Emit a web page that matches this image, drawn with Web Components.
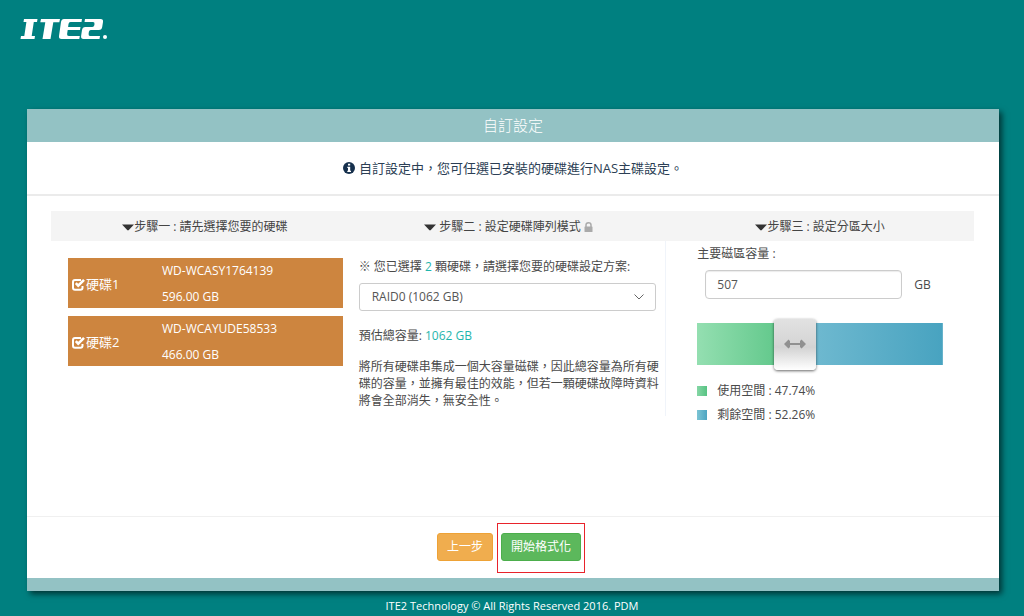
<!DOCTYPE html>
<html lang="zh-Hant">
<head>
<meta charset="utf-8">
<meta name="viewport" content="width=device-width, initial-scale=1">
<title>ITE2 NAS</title>
<style>
html,body{margin:0;min-height:100%}
body{background:#008080;color:#4a4a4a;font:12px/16px "Open Sans","Noto Sans CJK TC",sans-serif}
</style>
</head>
<body>
<nas-setup></nas-setup>

<script>
function define(name, html, init) {
  const tpl = document.createElement('template');
  tpl.innerHTML = html;
  customElements.define(name, class extends HTMLElement {
    constructor() {
      super();
      this.attachShadow({mode: 'open'}).append(tpl.content.cloneNode(true));
    }
    connectedCallback() { if (init) init(this, this.shadowRoot); }
  });
}

define('ite-logo', `
<style>
:host{display:block;line-height:0}
a{display:inline-block}
svg{display:block}
</style>
<a href="#" aria-label="ITE2">
<svg width="88" height="22" viewBox="0 0 88 22" fill="#fff">
<path d="M4 1H17.500L17 4H13.800L11.700 18H15L14.500 21H0.500L1 18H4.300L6.400 4H3.500Z"/>
<path d="M21 1H40L39.300 4.300H33.300L30.500 21H22.500L25.300 4.300H20.300Z"/>
<path d="M44 1H62L61.500 4H50.500Q48.800 4 48.500 6L48.100 9H60.500L60 12H47.700L47.100 16Q46.800 18 48.800 18H59.800L59.300 21H41.500Q38.600 21 39 18L41 4Q41.500 1 44 1Z"/>
<path d="M65 1H80.500Q83.500 1 83 4L82.200 9Q81.800 12 78.800 12H70.800Q69.200 12 68.900 13.800L68.600 16Q68.400 18 70 18H80L79.500 21H63.500Q60.700 21 61.100 18L62 12Q62.500 9 65.300 9H72.300Q74 9 74.300 7.200L74.500 6Q74.800 4 73 4H64.500Z"/>
<circle cx="85" cy="19" r="2"/>
</svg></a>`);

define('setup-panel', `
<style>
:host{display:flex;flex-direction:column;background:#fff;box-shadow:3px 3px 6px rgba(0,0,0,.6)}
h1{margin:0;background:#93c2c4;color:#fff;font-size:15px;font-weight:300;line-height:33px;text-align:center}
.info{margin:0;display:flex;justify-content:center;align-items:center;gap:4px;padding:16px 0;font-size:13px;line-height:20px;color:#2b3e54;border-bottom:2px solid #ebebeb}
.body{flex:1;padding:15px 25px 15px 24px}
.actions{display:flex;justify-content:center;padding:16px 8px 17px 0;border-top:1px solid #f0f0f0}
.strip{height:13px;background:#93c2c4}
svg{display:block}
</style>
<h1><slot name="title"></slot></h1>
<p class="info"><svg width="12" height="12" viewBox="0 0 12 12" aria-hidden="true"><circle cx="6" cy="6" r="6" fill="#16304d"/><path d="M5 1.700H7.200V3.500H5ZM4.300 4.700H7.200V8.700H8V10H4.300V8.700H5V6H4.300Z" fill="#fff"/></svg><span><slot name="info"></slot></span></p>
<div class="body"><slot></slot></div>
<div class="actions"><slot name="actions"></slot></div>
<div class="strip"></div>`);

define('step-head', `
<style>
:host{display:block;background:#f4f4f4}
h2{margin:0;display:flex;align-items:center;justify-content:center;padding-top:2px;font-size:12px;font-weight:400;line-height:28px;color:#444}
:host([locked]) h2{gap:3px;padding-right:8px}
.lock{display:none}
:host([locked]) .lock{display:block}
</style>
<h2><svg width="12" height="7" viewBox="0 0 12 7" aria-hidden="true"><path d="M0 .5H12L6.800 6Q6 6.800 5.200 6Z" fill="#333"/></svg><span><slot></slot></span><svg class="lock" width="9" height="10" viewBox="0 0 9 10" aria-hidden="true"><path d="M2 5V3Q2 .8 4.500 .8T7 3V5" fill="none" stroke="#aaa" stroke-width="1.500"/><rect x=".5" y="4.500" width="8" height="5.500" rx=".6" fill="#aaa"/></svg></h2>`);

define('disk-card', `
<style>
:host{display:block;background:#cd853f;color:#fff}
label{display:grid;grid-template-columns:90px 1fr;align-items:center;height:50px;padding:0 4px;box-sizing:border-box}
.name{display:flex;align-items:center;font-size:13px;line-height:20px}
.meta{display:grid;line-height:26px}
input{appearance:none;margin:0 1px 0 0;width:13px;height:13px;background:center/13px 13px no-repeat url("data:image/svg+xml,%3Csvg xmlns='http://www.w3.org/2000/svg' viewBox='0 0 13 13' fill='none' stroke='white'%3E%3Cpath d='M9 1.900H3Q1 1.900 1 3.900V9.700Q1 11.700 3 11.700H8.500Q10.500 11.700 10.500 9.700V8' stroke-width='2'/%3E%3C/svg%3E")}
input:checked{background-image:url("data:image/svg+xml,%3Csvg xmlns='http://www.w3.org/2000/svg' viewBox='0 0 13 13' fill='none' stroke='white'%3E%3Cpath d='M9 1.900H3Q1 1.900 1 3.900V9.700Q1 11.700 3 11.700H8.500Q10.500 11.700 10.500 9.700V8' stroke-width='2'/%3E%3Cpath d='M3.800 5.200L6.200 7.600L12 1.800' stroke-width='2.600'/%3E%3C/svg%3E")}
</style>
<label><span class="name"><input type="checkbox" checked><slot></slot></span>
<span class="meta"><span><slot name="model"></slot></span><span><slot name="size"></slot></span></span></label>`);

define('raid-picker', `
<style>
:host{display:block}
label,p{display:block;margin:0}
.box{position:relative;margin:8px 3px 17px 0}
select{appearance:none;display:block;width:100%;height:28px;border:1px solid #ccc;border-radius:3px;background:#fff;color:#555;font:inherit;padding:0 32px 0 12px}
.box svg{position:absolute;right:12px;top:11px;pointer-events:none}
b{font-weight:400;color:#1fb5ad}
.note{margin-top:14px;line-height:17px}
</style>
<label for="mode">※ 您已選擇 <b>2</b> 顆硬碟，請選擇您要的硬碟設定方案:</label>
<div class="box"><select id="mode"><option>RAID0 (1062 GB)</option><option>RAID1 (466 GB)</option></select>
<svg width="10" height="6" viewBox="0 0 10 6" aria-hidden="true"><path d="M.5 .5L5 5L9.500 .5" fill="none" stroke="#666"/></svg></div>
<p>預估總容量: <b>1062 GB</b></p>
<p class="note"><slot></slot></p>`);

define('partition-size', `
<style>
:host{display:block}
label{display:block}
.field{display:flex;align-items:center;gap:12px;padding:8px 0 0 8px}
input[type=text]{box-sizing:border-box;width:83%;max-width:197px;height:29px;border:1px solid #ccc;border-radius:4px;box-shadow:inset 0 1px 1px rgba(0,0,0,.08);background:#fff;color:#555;font:inherit;padding:0 11px}
input[type=range]{appearance:none;display:block;width:100%;height:52px;margin:19px 0 13px;background:linear-gradient(90deg,#94dfb1,#57c383 40%,#74bcd2 40%,#48a3c0) center/100% 42px no-repeat}
input[type=range]::-webkit-slider-thumb{appearance:none;width:42px;height:51px;border-radius:4px;box-shadow:0 1px 3px rgba(0,0,0,.6);background:url("data:image/svg+xml,%3Csvg xmlns='http://www.w3.org/2000/svg' width='22' height='10' viewBox='0 0 22 10'%3E%3Cpath d='M0 5L4.500 .5L6 2V4H16V2L17.500 .5L22 5L17.500 9.500L16 8V6H6V8L4.500 9.500Z' fill='%23909090'/%3E%3C/svg%3E") center no-repeat,linear-gradient(#e2e2e2,#d5d5d5 50%,#d2d2d2 55%,#fff)}
ul{list-style:none;margin:0;padding:0;display:grid;gap:8px}
li{display:flex;align-items:center;gap:10px}
i{width:10px;height:10px;background:linear-gradient(90deg,#85d6a5,#57c383)}
i.rest{background:linear-gradient(90deg,#7cc4d4,#4da5c2)}
</style>
<label for="size">主要磁區容量 :</label>
<div class="field"><input id="size" type="text" value="507"><span>GB</span></div>
<input type="range" min="0" max="1350" value="507" aria-label="主要磁區容量">
<ul><li><i></i><span>使用空間 : 47.74%</span></li><li><i class="rest"></i><span>剩餘空間 : 52.26%</span></li></ul>`);

define('action-button', `
<style>
:host{display:block;position:relative}
button{display:block;height:28px;padding:0 9px;border:1px solid #eea236;border-radius:3px;background:#f0ad4e;color:#fff;font:inherit}
:host([primary]){margin-left:8px}
:host([primary]) button{background:#5cb85c;border-color:#4cae4c}
:host([primary])::after{content:"";position:absolute;inset:-10px -4px -12px;border:1px solid #e8232b;pointer-events:none}
</style>
<button type="button"><slot></slot></button>`);

define('nas-setup', `
<style>
:host{display:flex;flex-direction:column;min-height:100vh}
header{padding:18px 20px 0;height:91px}
setup-panel{flex:1;margin:0 25px 0 27px}
.steps{display:grid;grid-template-columns:repeat(3,1fr)}
.disks{display:grid;gap:8px;align-content:start;padding:17px 16px 0 17px}
.raid{align-self:start;padding:18px 6px 7px 0;border-right:1px solid #f0f4fa}
.part{padding:5px 31px 0}
footer{color:#fff;text-align:center;font-size:11px;padding:7px 0 2px;line-height:16px}
</style>
<header><ite-logo></ite-logo></header>
<setup-panel>
<span slot="title">自訂設定</span>
<span slot="info">自訂設定中，您可任選已安裝的硬碟進行NAS主碟設定。</span>
<div class="steps">
<step-head>步驟一 : 請先選擇您要的硬碟</step-head>
<step-head locked>步驟二 : 設定硬碟陣列模式</step-head>
<step-head>步驟三 : 設定分區大小</step-head>
<div class="disks">
<disk-card>硬碟1<span slot="model">WD-WCASY1764139</span><span slot="size">596.00 GB</span></disk-card>
<disk-card>硬碟2<span slot="model">WD-WCAYUDE58533</span><span slot="size">466.00 GB</span></disk-card>
</div>
<div class="raid"><raid-picker>將所有硬碟串集成一個大容量磁碟，因此總容量為所有硬碟的容量，並擁有最佳的效能，但若一顆硬碟故障時資料將會全部消失，無安全性。</raid-picker></div>
<div class="part"><partition-size></partition-size></div>
</div>
<action-button slot="actions">上一步</action-button>
<action-button slot="actions" primary>開始格式化</action-button>
</setup-panel>
<footer>ITE2 Technology © All Rights Reserved 2016. PDM</footer>`);
</script>
</body>
</html>
